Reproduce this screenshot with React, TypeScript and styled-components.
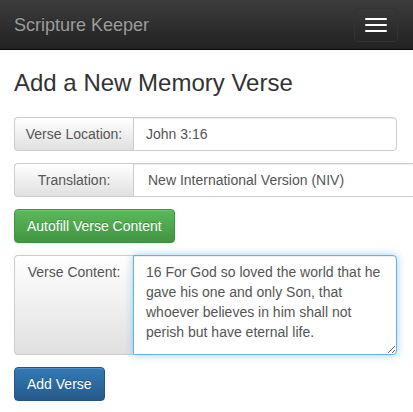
import React, { useEffect, useRef, useState } from "react";
import styled, { createGlobalStyle } from "styled-components";

const GlobalStyle = createGlobalStyle`
  html, body {
    margin: 0;
    padding: 0;
    overflow: hidden;
    background: #fff;
    font-family: "Liberation Sans", Arial, Helvetica, sans-serif;
    font-size: 14px;
    line-height: 1.42857;
    color: #333;
  }
  * {
    box-sizing: border-box;
  }
`;

const Navbar = styled.nav`
  height: 50px;
  display: flex;
  align-items: flex-start;
  justify-content: space-between;
  background-image: linear-gradient(to bottom, #3c3c3c 0, #222 100%);
  border-bottom: 1px solid #080808;
`;

const Brand = styled.a`
  padding: 15px 14px;
  font-size: 18px;
  line-height: 20px;
  color: #9d9d9d;
  text-decoration: none;
  text-shadow: 0 -1px 0 rgba(0, 0, 0, 0.25);
`;

const Toggle = styled.button`
  margin: 8px 15px 0 0;
  padding: 9px 10px;
  display: flex;
  flex-direction: column;
  gap: 4px;
  background: transparent;
  border: 1px solid #333;
  border-radius: 4px;
  cursor: pointer;
`;

const IconBar = styled.span`
  display: block;
  width: 22px;
  height: 2px;
  border-radius: 1px;
  background: #fff;
`;

const Container = styled.div`
  padding: 0 16px 0 14px;
`;

const Title = styled.h3`
  margin: 20px 0 21px;
  font-size: 24px;
  font-weight: 500;
  line-height: 1.1;
  color: #333;
`;

const Form = styled.form`
  display: flex;
  flex-direction: column;
  align-items: flex-start;
  gap: 12px;
`;

// $bleed: the group runs on to the right edge of the window (select is cut off there)
const Group = styled.div<{ $tall?: boolean; $bleed?: boolean }>`
  display: flex;
  width: ${(p) => (p.$bleed ? "calc(100% + 16px)" : "100%")};
  height: ${(p) => (p.$tall ? "100px" : "34px")};
`;

const Addon = styled.span<{ $top?: boolean }>`
  flex: none;
  width: 119px;
  padding: 6px 12px;
  display: flex;
  justify-content: center;
  align-items: ${(p) => (p.$top ? "flex-start" : "center")};
  font-size: 14px;
  line-height: 20px;
  color: #555;
  background-image: linear-gradient(to bottom, #fff 0, #e0e0e0 100%);
  border: 1px solid #ccc;
  border-right: 0;
  border-radius: 4px 0 0 4px;
  white-space: nowrap;
`;

const fieldBase = `
  font-family: "Liberation Sans", Arial, Helvetica, sans-serif;
  font-size: 14px;
  line-height: 20px;
  color: #555;
  background: #fff;
  border: 1px solid #ccc;
  border-radius: 0 4px 4px 0;
  box-shadow: inset 0 1px 1px rgba(0, 0, 0, 0.075);
  outline: none;
`;

const Input = styled.input`
  ${fieldBase}
  flex: 1;
  min-width: 0;
  height: 34px;
  padding: 6px 12px;
`;

const Select = styled.select`
  ${fieldBase}
  flex: 1;
  min-width: 0;
  height: 34px;
  padding: 6px 12px 6px 14px;
  border-right: 0;
  border-radius: 0;
  appearance: none;
`;

const TextArea = styled.textarea`
  ${fieldBase}
  flex: 1;
  min-width: 0;
  height: 100px;
  padding: 6px 12px;
  border-color: #66afe9;
  box-shadow: inset 0 1px 1px rgba(0, 0, 0, 0.075),
    0 0 8px rgba(102, 175, 233, 0.6);
  &:focus {
    border-color: #66afe9;
  }
`;

const Button = styled.button<{ $variant: "success" | "primary" }>`
  padding: 6px 12px;
  font-family: "Liberation Sans", Arial, Helvetica, sans-serif;
  font-size: 14px;
  line-height: 20px;
  color: #fff;
  border: 1px solid
    ${(p) => (p.$variant === "success" ? "#3e8f3e" : "#245580")};
  border-radius: 4px;
  background-image: ${(p) =>
    p.$variant === "success"
      ? "linear-gradient(to bottom, #5cb85c 0, #419641 100%)"
      : "linear-gradient(to bottom, #337ab7 0, #265a88 100%)"};
  text-shadow: 0 -1px 0 rgba(0, 0, 0, 0.2);
  box-shadow: inset 0 1px 0 rgba(255, 255, 255, 0.15),
    0 1px 1px rgba(0, 0, 0, 0.075);
  cursor: pointer;
`;

const App: React.FC = () => {
  const [location, setLocation] = useState("John 3:16");
  const [translation, setTranslation] = useState("NIV");
  const [content, setContent] = useState(
    "16 For God so loved the world that he gave his one and only Son, that whoever believes in him shall not perish but have eternal life."
  );
  const areaRef = useRef<HTMLTextAreaElement>(null);

  useEffect(() => {
    const el = areaRef.current;
    if (el) {
      el.focus();
      el.setSelectionRange(3, 3);
    }
  }, []);

  return (
    <>
      <GlobalStyle />
      <Navbar>
        <Brand href="#">Scripture Keeper</Brand>
        <Toggle type="button" aria-label="Toggle navigation">
          <IconBar />
          <IconBar />
          <IconBar />
        </Toggle>
      </Navbar>
      <Container>
        <Title>Add a New Memory Verse</Title>
        <Form onSubmit={(e) => e.preventDefault()}>
          <Group>
            <Addon>Verse Location:</Addon>
            <Input
              value={location}
              onChange={(e) => setLocation(e.target.value)}
            />
          </Group>
          <Group $bleed>
            <Addon>Translation:</Addon>
            <Select
              value={translation}
              onChange={(e) => setTranslation(e.target.value)}
            >
              <option value="NIV">New International Version (NIV)</option>
              <option value="ESV">English Standard Version (ESV)</option>
              <option value="KJV">King James Version (KJV)</option>
            </Select>
          </Group>
          <Button type="button" $variant="success">
            Autofill Verse Content
          </Button>
          <Group $tall>
            <Addon $top>Verse Content:</Addon>
            <TextArea
              ref={areaRef}
              value={content}
              onChange={(e) => setContent(e.target.value)}
            />
          </Group>
          <Button type="submit" $variant="primary">
            Add Verse
          </Button>
        </Form>
      </Container>
    </>
  );
};

export default App;
